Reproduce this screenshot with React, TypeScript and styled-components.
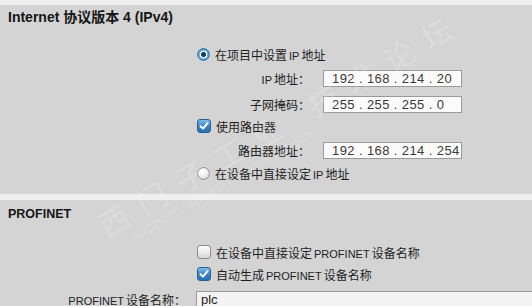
import React from "react";
import styled, { createGlobalStyle } from "styled-components";

const Global = createGlobalStyle`
  html, body { margin: 0; padding: 0; }
  body { background: #d4d4d4; }
`;

const FONT = `"Liberation Sans", "Noto Sans CJK SC", sans-serif`;

const Page = styled.div`
  position: relative;
  width: 532px;
  height: 306px;
  overflow: hidden;
  background: #d4d4d4;
  font-family: ${FONT};
  font-size: 12px;
  color: #1e1e1e;
  display: flex;
  flex-direction: column;
`;

const Band = styled.div<{ $h: number; $mt?: number }>`
  height: ${(p) => p.$h}px;
  margin-top: ${(p) => p.$mt ?? 0}px;
  background: #efefef;
  flex-shrink: 0;
`;

const SectionTitle = styled.div<{ $h: number; $size: number }>`
  height: ${(p) => p.$h}px;
  line-height: ${(p) => p.$h}px;
  padding-left: 8px;
  font-size: ${(p) => p.$size}px;
  font-weight: bold;
  color: #161616;
  flex-shrink: 0;
`;

const OptionRow = styled.label<{ $mt: number }>`
  display: flex;
  align-items: center;
  gap: 5px;
  height: 18px;
  margin-top: ${(p) => p.$mt}px;
  padding-left: 197px;
  flex-shrink: 0;
  white-space: nowrap;
`;

const Latin = styled.span`
  font-size: 11px;
  margin: 0 2px;
`;

const RadioDot = styled.span<{ $on?: boolean }>`
  width: 13px;
  height: 13px;
  box-sizing: border-box;
  border-radius: 50%;
  border: 1px solid ${(p) => (p.$on ? "#2f6f9e" : "#8a8a8a")};
  background: ${(p) =>
    p.$on
      ? "radial-gradient(circle, #1c3f66 0 2.2px, #ffffff 2.8px 3.4px, #6fb3e3 4px, #3b87c4 100%)"
      : "radial-gradient(circle at 40% 35%, #ffffff 0, #f2f2f2 40%, #c9c9c9 100%)"};
  box-shadow: 0 0 0 0.5px rgba(255, 255, 255, 0.6);
`;

const CheckBox = styled.span<{ $on?: boolean }>`
  width: 14px;
  height: 14px;
  box-sizing: border-box;
  border-radius: 3px;
  border: 1px solid ${(p) => (p.$on ? "#2c5f8e" : "#8c8c8c")};
  background: ${(p) =>
    p.$on
      ? "linear-gradient(180deg, #7fbdea 0%, #3a86c8 50%, #2a6fb0 100%)"
      : "linear-gradient(180deg, #fbfbfb 0%, #ececec 50%, #d8d8d8 100%)"};
  display: flex;
  align-items: center;
  justify-content: center;
`;

const FieldRow = styled.div<{ $mt: number }>`
  display: flex;
  align-items: center;
  margin-top: ${(p) => p.$mt}px;
  flex-shrink: 0;
  white-space: nowrap;
`;

const FieldLabel = styled.span<{ $w: number; $gap: number }>`
  width: ${(p) => p.$w}px;
  margin-right: ${(p) => p.$gap}px;
  text-align: right;
  color: #222;
`;

const IpBox = styled.div`
  width: 139px;
  height: 17px;
  box-sizing: border-box;
  border: 1px solid #9a9a9a;
  background: #fbfbfb;
  padding-left: 8px;
  font-size: 13px;
  line-height: 15px;
  letter-spacing: 0.4px;
  color: #3a3a3a;
  white-space: pre;
`;

const TextBox = styled.div`
  flex: 1;
  height: 17px;
  box-sizing: border-box;
  border: 1px solid #9a9a9a;
  border-right: none;
  background: #f4f4f4;
  padding-left: 4px;
  font-size: 13px;
  line-height: 15px;
  color: #222;
`;

const Watermark = styled.div`
  position: absolute;
  left: 92px;
  top: 212px;
  transform: rotate(-30deg);
  transform-origin: left top;
  pointer-events: none;
  color: rgba(255, 255, 255, 0.2);
  font-family: "Noto Sans CJK SC", sans-serif;
  white-space: nowrap;
`;

const WmBig = styled.div`
  font-size: 30px;
  letter-spacing: 14px;
  line-height: 34px;
`;

const WmSmall = styled.div`
  font-family: "Liberation Sans", sans-serif;
  font-size: 13px;
  padding-left: 22px;
  letter-spacing: 1.5px;
`;

const Check = () => (
  <svg width="10" height="10" viewBox="0 0 10 10">
    <path d="M1.5 5.2 L4 7.6 L8.6 2.2" fill="none" stroke="#ffffff" strokeWidth="1.9" strokeLinecap="round" strokeLinejoin="round" />
  </svg>
);

export default function App() {
  return (
    <>
      <Global />
      <Page>
        <Band $h={5} />
        <SectionTitle $h={24} $size={14}>Internet 协议版本 4 (IPv4)</SectionTitle>

        <OptionRow $mt={16}>
          <RadioDot $on />
          <span>
            在项目中设置<Latin>IP</Latin>地址
          </span>
        </OptionRow>

        <FieldRow $mt={7}>
          <FieldLabel $w={310} $gap={13}>
            <Latin>IP</Latin>地址：
          </FieldLabel>
          <IpBox>{"192 . 168 . 214 . 20"}</IpBox>
        </FieldRow>

        <FieldRow $mt={9}>
          <FieldLabel $w={310} $gap={13}>子网掩码：</FieldLabel>
          <IpBox>{"255 . 255 . 255 . 0"}</IpBox>
        </FieldRow>

        <OptionRow $mt={4}>
          <CheckBox $on>
            <Check />
          </CheckBox>
          <span>使用路由器</span>
        </OptionRow>

        <FieldRow $mt={7}>
          <FieldLabel $w={310} $gap={13}>路由器地址：</FieldLabel>
          <IpBox>{"192 . 168 . 214 . 254"}</IpBox>
        </FieldRow>

        <OptionRow $mt={5}>
          <RadioDot />
          <span>
            在设备中直接设定<Latin>IP</Latin>地址
          </span>
        </OptionRow>

        <Band $h={6} $mt={12} />
        <SectionTitle $h={28} $size={12.5}>PROFINET</SectionTitle>

        <OptionRow $mt={15}>
          <CheckBox />
          <span>
            在设备中直接设定<Latin>PROFINET</Latin>设备名称
          </span>
        </OptionRow>

        <OptionRow $mt={4}>
          <CheckBox $on>
            <Check />
          </CheckBox>
          <span>
            自动生成<Latin>PROFINET</Latin>设备名称
          </span>
        </OptionRow>

        <FieldRow $mt={8}>
          <FieldLabel $w={186} $gap={10}>
            <Latin>PROFINET</Latin>设备名称：
          </FieldLabel>
          <TextBox>plc</TextBox>
        </FieldRow>

        <Watermark>
          <WmBig>西门子工业 技术论坛</WmBig>
          <WmSmall>support.industry.siemens.com</WmSmall>
        </Watermark>
      </Page>
    </>
  );
}
